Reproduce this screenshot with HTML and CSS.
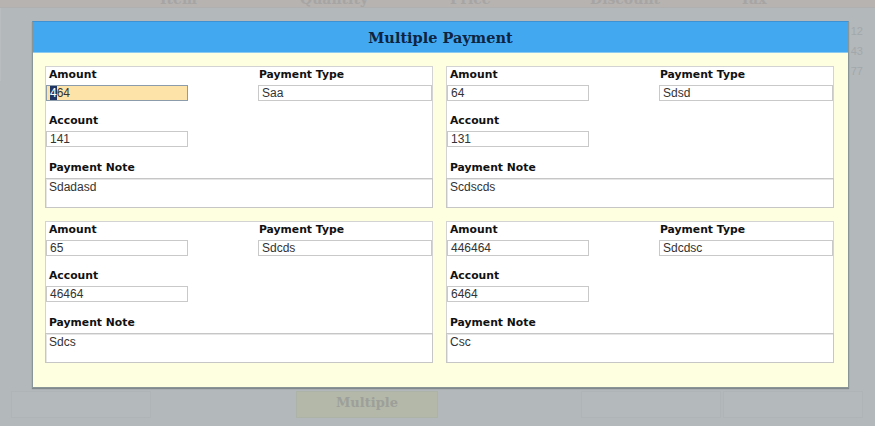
FILE: index.html
```html
<!DOCTYPE html>
<html>
<head>
<meta charset="utf-8">
<link rel="stylesheet" href="styles.css">
</head>
<body>
<div class="page">
  <div class="thead">
    <span class="th th-item">Item</span>
    <span class="th th-qty">Quantity</span>
    <span class="th th-price">Price</span>
    <span class="th th-disc">Discount</span>
    <span class="th th-tax">Tax</span>
  </div>
  <div class="rows">
    <div class="row">12</div>
    <div class="row">43</div>
    <div class="row">77</div>
  </div>
  <div class="spacer"></div>
  <div class="footer">
    <div class="fbox fbox-1"></div>
    <div class="fbtn">Multiple</div>
    <div class="fbox fbox-3"></div>
    <div class="fbox fbox-4"></div>
  </div>

  <div class="modal">
    <div class="modal-head">Multiple Payment</div>
    <div class="modal-body">
      <div class="panel">
        <div class="pair">
          <div class="col">
            <div class="lbl">Amount</div>
            <div class="field short focused"><span class="sel">4</span>64</div>
          </div>
          <div class="col">
            <div class="lbl">Payment Type</div>
            <div class="field">Saa</div>
          </div>
        </div>
        <div class="lbl">Account</div>
        <div class="field short acct">141</div>
        <div class="lbl">Payment Note</div>
        <div class="note">Sdadasd</div>
      </div>
      <div class="panel">
        <div class="pair">
          <div class="col">
            <div class="lbl">Amount</div>
            <div class="field short">64</div>
          </div>
          <div class="col">
            <div class="lbl">Payment Type</div>
            <div class="field">Sdsd</div>
          </div>
        </div>
        <div class="lbl">Account</div>
        <div class="field short acct">131</div>
        <div class="lbl">Payment Note</div>
        <div class="note">Scdscds</div>
      </div>
      <div class="panel">
        <div class="pair">
          <div class="col">
            <div class="lbl">Amount</div>
            <div class="field short">65</div>
          </div>
          <div class="col">
            <div class="lbl">Payment Type</div>
            <div class="field">Sdcds</div>
          </div>
        </div>
        <div class="lbl">Account</div>
        <div class="field short acct">46464</div>
        <div class="lbl">Payment Note</div>
        <div class="note">Sdcs</div>
      </div>
      <div class="panel">
        <div class="pair">
          <div class="col">
            <div class="lbl">Amount</div>
            <div class="field short">446464</div>
          </div>
          <div class="col">
            <div class="lbl">Payment Type</div>
            <div class="field">Sdcdsc</div>
          </div>
        </div>
        <div class="lbl">Account</div>
        <div class="field short acct">6464</div>
        <div class="lbl">Payment Note</div>
        <div class="note">Csc</div>
      </div>
    </div>
  </div>
</div>
</body>
</html>
```
FILE: styles.css
```css
* { box-sizing: border-box; }
html, body { margin: 0; padding: 0; }
body {
  background: #b3b8ba;
  font-family: "DejaVu Sans", Verdana, sans-serif;
}
.page {
  position: relative;
  width: 875px;
  height: 426px;
  overflow: hidden;
  display: flex;
  flex-direction: column;
}

/* faded page behind the overlay */
.thead {
  height: 8px;
  background: #b6b3b1;
  display: flex;
  overflow: hidden;
  border-bottom: 1px solid #b0b0b0;
}
.th {
  display: block;
  margin-top: -9px;
  line-height: 16px;
  font-family: "DejaVu Serif", serif;
  font-weight: bold;
  font-size: 14px;
  color: #a7a5a4;
}
.th-item { margin-left: 160px; width: 140px; }
.th-qty { width: 150px; }
.th-price { width: 140px; }
.th-disc { width: 150px; }
.th-tax { width: 60px; }

.rows {
  display: flex;
  flex-direction: column;
  padding-top: 13px;
  border-left: 1px solid #b9bdbf;
}
.row {
  height: 20px;
  line-height: 20px;
  text-align: right;
  padding-right: 12px;
  font-family: "Liberation Sans", Arial, sans-serif;
  font-size: 11px;
  color: #a2a8aa;
}
.spacer { flex: 1; }
.footer {
  display: flex;
  height: 27px;
  margin-bottom: 8px;
}
.fbox {
  width: 140px;
  height: 27px;
  border: 1px solid #afb4b6;
  background: #b4b9bb;
}
.fbox-1 { margin-left: 11px; }
.fbox-3 { margin-left: 143px; }
.fbox-4 { margin-left: 2px; }
.fbtn {
  margin-left: 145px;
  width: 142px;
  height: 27px;
  background: #b4b8a8;
  border: 1px solid #aeb3a8;
  font-family: "DejaVu Serif", serif;
  font-weight: bold;
  font-size: 13px;
  line-height: 22px;
  text-align: center;
  color: #9c9f9a;
}

/* modal */
.modal {
  position: absolute;
  left: 32px;
  top: 21px;
  width: 817px;
  height: 367px;
  background: #fefee0;
  border: 1px solid #8a9598;
  border-top-color: #3e92d4;
  box-shadow: 0 1px 1px rgba(80, 90, 95, 0.5);
}
.modal-head {
  height: 31px;
  background: #42a9f1;
  border-bottom: 1px solid #8ccaf0;
  text-align: center;
  font-family: "DejaVu Serif", serif;
  font-weight: bold;
  font-size: 14.5px;
  line-height: 32px;
  color: #0f2440;
}
.modal-body {
  display: grid;
  grid-template-columns: 388px 388px;
  column-gap: 13px;
  row-gap: 13px;
  padding: 13px 14px 0 12px;
}
.panel {
  height: 142px;
  background: #fff;
  border: 1px solid #d3d3d3;
  display: flex;
  flex-direction: column;
}
.pair {
  display: grid;
  grid-template-columns: 212px 1fr;
}
.col { display: flex; flex-direction: column; }
.lbl {
  font-size: 10.8px;
  font-weight: bold;
  line-height: 13px;
  height: 13px;
  margin-top: 1px;
  padding-left: 3px;
  color: #111;
  margin-bottom: 4px;
}
.pair .col + .col .lbl { padding-left: 1px; }
.field {
  height: 16px;
  border: 1px solid #c9c9c9;
  background: #fff;
  font-family: "Liberation Sans", Arial, sans-serif;
  font-size: 12px;
  line-height: 14px;
  padding-left: 3px;
  color: #333;
  margin-bottom: 12px;
  white-space: nowrap;
}
.field.acct { margin-bottom: 13px; }
.short { width: 142px; }
.focused {
  background: #fde3a7;
  border-color: #8c9cab;
}
.sel {
  background: #1f3564;
  color: #fff;
}
.note {
  margin: 0 -1px -1px -1px;
  flex: 1;
  border: 1px solid #c6c6c6;
  box-shadow: inset 1px 1px 0 #e6e6e6;
  font-family: "Liberation Sans", Arial, sans-serif;
  font-size: 12px;
  line-height: 14px;
  padding: 1px 3px;
  color: #333;
}
```
